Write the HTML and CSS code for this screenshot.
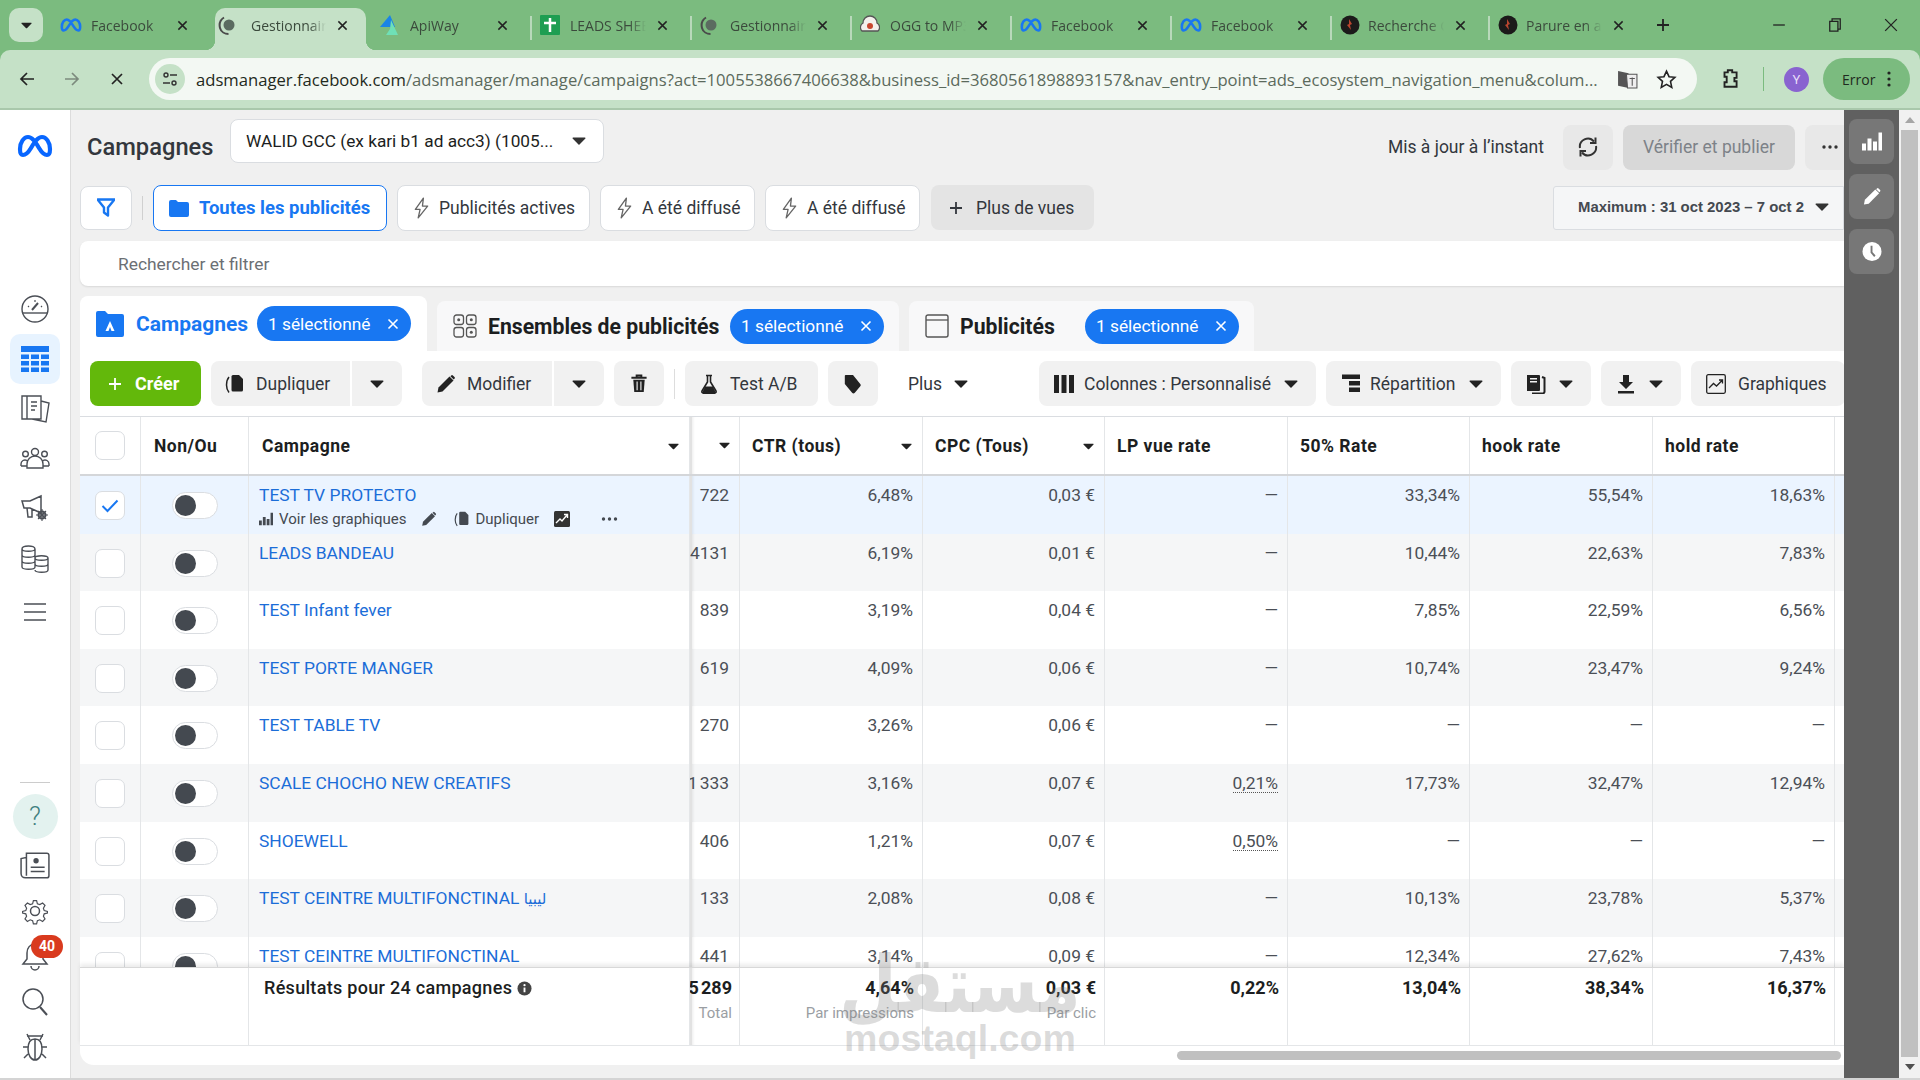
FILE: index.html
```html
<!DOCTYPE html>
<html lang="fr">
<head>
    <meta charset="UTF-8">
    <title>Campagnes - Gestionnaire de publicités</title>
    <link rel="stylesheet" href="styles.css">
</head>
<body>
    <svg class="sprite" xmlns="http://www.w3.org/2000/svg">
        <symbol id="i-x" viewBox="0 0 12 12"><path d="M1.5 1.5l9 9M10.5 1.5l-9 9" fill="none" stroke="currentColor" stroke-width="1.6"/></symbol>
        <symbol id="i-caret" viewBox="0 0 14 8"><path d="M1 .5h12a.6.6 0 0 1 .4 1L7.5 7.4a.7.7 0 0 1-1 0L.6 1.5A.6.6 0 0 1 1 .5z" fill="currentColor"/></symbol>
        <symbol id="i-meta" viewBox="0 0 36 24"><path d="M3 15C3 8 7 3 11 3c4 0 7 4 11 11 3 5 5 7 8 7 2 0 3-2 3-6 0-7-4-12-8-12-4 0-7 4-11 11-3 5-5 7-8 7-2 0-3-2-3-6z" fill="none" stroke="currentColor" stroke-width="4.2"/></symbol>
        <symbol id="i-bolt" viewBox="0 0 18 24"><path d="M11 1.5L2.5 13.5h5l-2 9L15.5 10h-5.5z" fill="none" stroke="currentColor" stroke-width="1.4" stroke-linejoin="round"/></symbol>
        <symbol id="i-folder" viewBox="0 0 20 18"><path d="M0 3a2 2 0 0 1 2-2h5l2 2h9a2 2 0 0 1 2 2v11a2 2 0 0 1-2 2H2a2 2 0 0 1-2-2z" fill="currentColor"/></symbol>
        <symbol id="i-plus" viewBox="0 0 14 14"><path d="M7 1v12M1 7h12" fill="none" stroke="currentColor" stroke-width="1.8"/></symbol>
        <symbol id="i-copy" viewBox="0 0 20 20"><path d="M8 1h6l4 4v11a1.500 1.500 0 0 1-1.500 1.500H8A1.500 1.500 0 0 1 6.500 16V2.500A1.500 1.500 0 0 1 8 1z" fill="currentColor"/><path d="M4 3C2.300 5 1.500 8 1.500 11s.8 5.500 2.500 7.500" fill="none" stroke="currentColor" stroke-width="1.500"/></symbol>
        <symbol id="i-pencil" viewBox="0 0 20 20"><path d="M13.500 2.500l4 4L6.500 17.500 1.500 18.500l1-5z" fill="currentColor"/><path d="M15.200 1.500a1.200 1.200 0 0 1 1.700 0l1.600 1.600a1.200 1.200 0 0 1 0 1.700l-.8.800-3.300-3.300z" fill="currentColor"/></symbol>
        <symbol id="i-trash" viewBox="0 0 18 20"><path d="M1 4h16M6.500 3.500V1.500h5v2" fill="none" stroke="currentColor" stroke-width="2"/><path d="M3 6h12l-1 13H4z" fill="currentColor"/><path d="M7 8v9M11 8v9" stroke="#f1f1f1" stroke-width="1.200"/></symbol>
        <symbol id="i-flask" viewBox="0 0 20 20"><path d="M7 1.500h6M8.500 1.500V8L3 17a1.500 1.500 0 0 0 1.300 2.200h11.400A1.500 1.500 0 0 0 17 17L11.500 8V1.500" fill="none" stroke="currentColor" stroke-width="1.600"/><path d="M6 12.500h8l3 6.500H3z" fill="currentColor"/></symbol>
        <symbol id="i-tag" viewBox="0 0 20 22"><path d="M2 1h8l8 10a2 2 0 0 1 0 2.500l-6 7a2 2 0 0 1-3 0L1 11V2a1 1 0 0 1 1-1z" fill="currentColor"/></symbol>
        <symbol id="i-cols" viewBox="0 0 20 20"><path d="M0 1h5v18H0zM7.500 1h5v18h-5zM15 1h5v18h-5z" fill="currentColor"/></symbol>
        <symbol id="i-split" viewBox="0 0 18 18"><path d="M0 0h18v4.500H0zM7 6.500h11V11H7zM7 13h11v4.500H7z" fill="currentColor"/></symbol>
        <symbol id="i-report" viewBox="0 0 20 20"><path d="M1 1h12a1 1 0 0 1 1 1v14a1 1 0 0 1-1 1H1zM4 4v1.500h7V4zM4 7v1.500h7V7z" fill="currentColor" fill-rule="evenodd"/><path d="M16 3l2.500 1v14l-1 1.500H6" fill="none" stroke="currentColor" stroke-width="2"/></symbol>
        <symbol id="i-down" viewBox="0 0 16 20"><path d="M5 1h6v7h4l-7 7-7-7h4zM0 17h16v2.500H0z" fill="currentColor"/></symbol>
        <symbol id="i-chart" viewBox="0 0 20 20"><rect x=".7" y=".7" width="18.600" height="18.600" rx="1.500" fill="none" stroke="currentColor" stroke-width="1.300"/><path d="M3 14l4.500-4.500 3 2.500L16 6.500M13 6h3.500v3.500" fill="none" stroke="currentColor" stroke-width="1.300"/></symbol>
        <symbol id="i-bars" viewBox="0 0 20 18"><path d="M0 11h4v7H0zM5.500 6h4v12h-4zM11 9h4v9h-4zM16.500 0h3.500v18h-3.500z" fill="currentColor"/></symbol>
        <symbol id="i-dots" viewBox="0 0 16 4"><circle cx="2" cy="2" r="1.700" fill="currentColor"/><circle cx="8" cy="2" r="1.700" fill="currentColor"/><circle cx="14" cy="2" r="1.700" fill="currentColor"/></symbol>
        <symbol id="i-globe" viewBox="0 0 20 20"><path d="M6 2.500C2 5 1 9 2 13s5 6 8.500 6" fill="none" stroke="#4a4a4a" stroke-width="2"/><circle cx="11" cy="10" r="5.500" fill="#5b6b60"/></symbol>
        <symbol id="i-fire" viewBox="0 0 20 20"><circle cx="10" cy="10" r="9.500" fill="#1c1a1a"/><path d="M9 4l3 5-2 1 1 5-4-5 2-1z" fill="#b9452f"/></symbol>
    </svg>

    <header class="chrome">
        <div class="tabstrip">
            <button class="tab-list"><svg class="ico ico-10"><use href="#i-caret"/></svg></button>
            <div class="tab"><svg class="fav fav-meta"><use href="#i-meta"/></svg><span class="tab-title">Facebook</span><svg class="tab-x"><use href="#i-x"/></svg></div>
            <div class="tab active"><svg class="fav"><use href="#i-globe"/></svg><span class="tab-title">Gestionnaire de publicités</span><svg class="tab-x"><use href="#i-x"/></svg></div>
            <div class="tab"><svg class="fav" viewBox="0 0 20 20"><path d="M10 0l5 12H0z" fill="#1a84e6"/><path d="M11 5l7 15H6l4-6z" fill="#6fe0b6"/></svg><span class="tab-title">ApiWay</span><svg class="tab-x"><use href="#i-x"/></svg></div>
            <div class="tab sep"><svg class="fav" viewBox="0 0 20 20"><rect width="20" height="20" rx="1" fill="#1e9e52"/><path d="M10 3v14M4 8h12" stroke="#fff" stroke-width="2.500"/></svg><span class="tab-title">LEADS SHEET 2023</span><svg class="tab-x"><use href="#i-x"/></svg></div>
            <div class="tab sep"><svg class="fav"><use href="#i-globe"/></svg><span class="tab-title">Gestionnaire de publicités</span><svg class="tab-x"><use href="#i-x"/></svg></div>
            <div class="tab sep"><svg class="fav" viewBox="0 0 20 20"><path d="M2 16a5 5 0 0 1 1-8 7 7 0 0 1 14 0 5 5 0 0 1 1 8z" fill="#f4f1ec" stroke="#555" stroke-width="1.300"/><circle cx="10" cy="11" r="3" fill="#c8472f"/></svg><span class="tab-title">OGG to MP3 Converter</span><svg class="tab-x"><use href="#i-x"/></svg></div>
            <div class="tab sep"><svg class="fav fav-meta"><use href="#i-meta"/></svg><span class="tab-title">Facebook</span><svg class="tab-x"><use href="#i-x"/></svg></div>
            <div class="tab sep"><svg class="fav fav-meta"><use href="#i-meta"/></svg><span class="tab-title">Facebook</span><svg class="tab-x"><use href="#i-x"/></svg></div>
            <div class="tab sep tab-narrow"><svg class="fav"><use href="#i-fire"/></svg><span class="tab-title">Recherche Google</span><svg class="tab-x"><use href="#i-x"/></svg></div>
            <div class="tab sep tab-narrow"><svg class="fav"><use href="#i-fire"/></svg><span class="tab-title">Parure en argent</span><svg class="tab-x"><use href="#i-x"/></svg></div>
            <div class="new-tab"><svg class="ico ico-14"><use href="#i-plus"/></svg></div>
            <div class="win-controls">
                <svg class="win-btn" viewBox="0 0 12 12"><path d="M1 6h10" stroke="currentColor" stroke-width="1.100"/></svg>
                <svg class="win-btn" viewBox="0 0 12 12"><path d="M3.500 2.500V.8h7v8.700H8.500M1.500 2.800h7v8.400h-7z" fill="none" stroke="currentColor" stroke-width="1.100"/></svg>
                <svg class="win-btn" viewBox="0 0 12 12"><path d="M1 1l10 10M11 1L1 11" stroke="currentColor" stroke-width="1.100"/></svg>
            </div>
        </div>
        <div class="toolbar-chrome">
            <svg class="nav-btn" viewBox="0 0 16 16"><path d="M15 8H2M8 2L2 8l6 6" fill="none" stroke="currentColor" stroke-width="1.700"/></svg>
            <svg class="nav-btn dim" viewBox="0 0 16 16"><path d="M1 8h13M8 2l6 6-6 6" fill="none" stroke="currentColor" stroke-width="1.700"/></svg>
            <svg class="nav-btn" viewBox="0 0 16 16"><path d="M3 3l10 10M13 3L3 13" fill="none" stroke="currentColor" stroke-width="1.700"/></svg>
            <div class="omnibox">
                <span class="site-chip">
                    <svg class="ico ico-16" viewBox="0 0 16 16"><circle cx="4" cy="4" r="2" fill="none" stroke="#333" stroke-width="1.400"/><path d="M8 4h7M1 12h7" stroke="#333" stroke-width="1.400"/><circle cx="12" cy="12" r="2" fill="none" stroke="#333" stroke-width="1.400"/></svg>
                </span>
                <span class="url"><b>adsmanager.facebook.com</b>/adsmanager/manage/campaigns?act=1005538667406638&amp;business_id=3680561898893157&amp;nav_entry_point=ads_ecosystem_navigation_menu&amp;colum...</span>
                <svg class="omni-ico" viewBox="0 0 20 20"><path d="M1 2l10 2v14L1 16z" fill="#555"/><path d="M9 5h10v13H10z" fill="#eee" stroke="#555"/><path d="M12 9h5M14.500 8v8" stroke="#555"/></svg>
                <svg class="omni-ico star" viewBox="0 0 20 20"><path d="M10 2l2.400 5.300 5.600.6-4.200 3.900 1.200 5.700L10 14.600 5 17.500l1.200-5.700L2 7.900l5.600-.6z" fill="none" stroke="#222" stroke-width="1.500"/></svg>
            </div>
            <svg class="ext-ico" viewBox="0 0 20 20"><path d="M5 4h3V2h4v2h4v5h-2v3h2v5H5v-4h2v-5H5z" fill="none" stroke="#222" stroke-width="1.700"/></svg>
            <span class="chrome-sep"></span>
            <span class="avatar">Y</span>
            <span class="error-pill">Error <svg class="ico kebab" viewBox="0 0 4 16"><circle cx="2" cy="2" r="1.600" fill="#222"/><circle cx="2" cy="8" r="1.600" fill="#222"/><circle cx="2" cy="14" r="1.600" fill="#222"/></svg></span>
        </div>
    </header>

    <div class="app">
        <nav class="sidenav">
            <svg class="nav-logo"><use href="#i-meta"/></svg>
            <div class="nav-top">
                <span class="nav-item"><svg viewBox="0 0 30 30"><circle cx="15" cy="15" r="13" fill="none" stroke="currentColor" stroke-width="1.400"/><path d="M3 19h24" stroke="currentColor" stroke-width="1.400"/><path d="M12 16l6-7" stroke="currentColor" stroke-width="2"/><path d="M8 12l1 1M15 6v2M22 12l-1 1" stroke="currentColor" stroke-width="1.200"/></svg></span>
                <span class="nav-item active"><svg viewBox="0 0 28 26"><path d="M0 0h28v6H0zM0 8.500h8V13H0zM10 8.500h8V13h-8zM20 8.500h8V13h-8zM0 15h8v4.500H0zM10 15h8v4.500h-8zM20 15h8v4.500h-8zM0 21.500h8V26H0zM10 21.500h8V26h-8zM20 21.500h8V26h-8z" fill="currentColor"/></svg></span>
                <span class="nav-item"><svg viewBox="0 0 30 30"><path d="M2 2h19v23H2zM7 2v23M11 8h6M11 12h6M11 16h4M21 7l8 2-3 19-14-3" fill="none" stroke="currentColor" stroke-width="1.400"/></svg></span>
                <span class="nav-item"><svg viewBox="0 0 30 24"><circle cx="15" cy="5" r="3.500" fill="none" stroke="currentColor" stroke-width="1.400"/><circle cx="5.500" cy="7" r="2.800" fill="none" stroke="currentColor" stroke-width="1.400"/><circle cx="24.500" cy="7" r="2.800" fill="none" stroke="currentColor" stroke-width="1.400"/><path d="M7 21v-4a6 6 0 0 1 16 0v4zM1 19v-2a4 4 0 0 1 6-3.500M29 19v-2a4 4 0 0 0-6-3.500M1 19h6M23 19h6" fill="none" stroke="currentColor" stroke-width="1.400"/></svg></span>
                <span class="nav-item"><svg viewBox="0 0 30 28"><path d="M2 6h8L21 1v17l-11-5H4zM7 13l1 9h4V14" fill="none" stroke="currentColor" stroke-width="1.500"/><circle cx="22" cy="20" r="3.500" fill="none" stroke="currentColor" stroke-width="2"/><path d="M22 14v12M16 20h12M18 16l8 8M26 16l-8 8" stroke="currentColor" stroke-width="1.100"/></svg></span>
                <span class="nav-item"><svg viewBox="0 0 30 30"><path d="M2 5c0-4 13-4 13 0v18c0 3-13 3-13 0zM2 5c0 3 13 3 13 0M2 11c0 3 13 3 13 0M2 17c0 3 13 3 13 0M15 14c0-3 13-3 13 0v12c0 3-13 3-13 0M15 14c0 3 13 3 13 0M15 20c0 3 13 3 13 0" fill="none" stroke="currentColor" stroke-width="1.400"/></svg></span>
                <span class="nav-item nav-menu"><svg viewBox="0 0 24 20"><path d="M1 2h22M1 10h22M1 18h22" stroke="currentColor" stroke-width="1.400"/></svg></span>
            </div>
            <div class="nav-bottom">
                <span class="nav-rule"></span>
                <span class="nav-help">?</span>
                <span class="nav-item"><svg viewBox="0 0 28 28"><path d="M6 3h19a2 2 0 0 1 2 2v19a2 2 0 0 1-2 2H5a4 4 0 0 1-4-4V8l5-1zM6 7v17" fill="none" stroke="currentColor" stroke-width="1.400"/><circle cx="15" cy="10" r="2.500" fill="currentColor"/><path d="M10 16h13M10 20h13" stroke="currentColor" stroke-width="1.400"/></svg></span>
                <span class="nav-item"><svg viewBox="0 0 30 30"><circle cx="15" cy="15" r="4.500" fill="none" stroke="currentColor" stroke-width="1.500"/><path d="M13 2h4l1 4 3 1 3.500-2 3 3-2 3.500 1 3 4 1v2l-4 1-1 3 2 3.500-3 3-3.500-2-3 1-1 4h-4l-1-4-3-1-3.500 2-3-3 2-3.500-1-3-4-1v-2l4-1 1-3-2-3.500 3-3L9 7l3-1z" fill="none" stroke="currentColor" stroke-width="1.500" transform="translate(3 3) scale(.8)"/></svg></span>
                <span class="nav-item bell"><svg viewBox="0 0 28 30"><path d="M14 3c-5 0-8 4-8 9v6l-4 5h24l-4-5v-6c0-5-3-9-8-9zM10 25a4 4 0 0 0 8 0" fill="none" stroke="currentColor" stroke-width="1.500"/></svg><span class="badge">40</span></span>
                <span class="nav-item"><svg viewBox="0 0 28 30"><circle cx="12" cy="12" r="10" fill="none" stroke="currentColor" stroke-width="1.500"/><path d="M19 20l7 8" stroke="currentColor" stroke-width="2"/></svg></span>
                <span class="nav-item"><svg viewBox="0 0 26 30"><path d="M13 7c5 0 7 4 7 10s-3 11-7 11-7-5-7-11 2-10 7-10zM13 7v21M8 8L5 2M18 8l3-6M6 15H1M20 15h5M6 22l-4 4M20 22l4 4M5 4h16" fill="none" stroke="currentColor" stroke-width="1.500"/></svg></span>
            </div>
        </nav>

        <main class="main">
            <div class="topbar">
                <h1 class="page-title">Campagnes</h1>
                <div class="account-select"><span>WALID GCC (ex kari b1 ad acc3) (1005...</span><svg class="caret"><use href="#i-caret"/></svg></div>
                <span class="updated">Mis à jour à l’instant</span>
                <button class="top-btn refresh"><svg class="ico ico-22" viewBox="0 0 22 22"><path d="M3 12a8 8 0 0 1 14-6.500M19 10a8 8 0 0 1-14 6.500" fill="none" stroke="#333" stroke-width="2"/><path d="M18.500 1.500v5.500h-5.500M3.500 20.500V15h5.500" fill="none" stroke="#333" stroke-width="2"/></svg></button>
                <button class="top-btn publish">Vérifier et publier</button>
                <button class="top-btn more"><svg class="ico ico-16h"><use href="#i-dots"/></svg></button>
            </div>

            <div class="viewbar">
                <button class="chip chip-filter"><svg class="ico ico-18" viewBox="0 0 18 18"><path d="M.5 1h17L11 9v8l-4-3V9z" fill="none" stroke="#1877f2" stroke-width="2.400" stroke-linejoin="round"/></svg></button>
                <span class="bar-sep"></span>
                <button class="chip chip-on"><svg class="ico ico-20"><use href="#i-folder"/></svg>Toutes les publicités</button>
                <button class="chip w-actives"><svg class="ico bolt"><use href="#i-bolt"/></svg>Publicités actives</button>
                <button class="chip w-diff"><svg class="ico bolt"><use href="#i-bolt"/></svg>A été diffusé</button>
                <button class="chip w-diff"><svg class="ico bolt"><use href="#i-bolt"/></svg>A été diffusé</button>
                <button class="chip chip-more"><svg class="ico ico-14"><use href="#i-plus"/></svg>Plus de vues</button>
                <div class="date-range"><span class="date-text">Maximum : 31 oct 2023 – 7 oct 2</span><svg class="caret"><use href="#i-caret"/></svg></div>
            </div>

            <div class="searchbar">Rechercher et filtrer</div>

            <div class="level-tabs">
                <div class="level-tab current">
                    <svg class="level-ico" viewBox="0 0 28 26"><path d="M0 2a2 2 0 0 1 2-2h7l3 3h14a2 2 0 0 1 2 2v19a2 2 0 0 1-2 2H2a2 2 0 0 1-2-2z" fill="#1877f2"/><path d="M14 10l-4.500 10h3l1.500-4 1.500 4h3z" fill="#fff"/></svg>
                    <span class="level-name">Campagnes</span>
                    <span class="sel-pill">1 sélectionné<svg class="pill-x"><use href="#i-x"/></svg></span>
                </div>
                <div class="level-tab wide">
                    <svg class="level-ico" viewBox="0 0 24 24"><g fill="none" stroke="#555" stroke-width="1.300"><rect x="1" y="1" width="9.500" height="9.500" rx="2.500"/><rect x="13.500" y="1" width="9.500" height="9.500" rx="2.500"/><rect x="1" y="13.500" width="9.500" height="9.500" rx="2.500"/><rect x="13.500" y="13.500" width="9.500" height="9.500" rx="2.500"/></g><circle cx="18.300" cy="5.700" r="1.500" fill="#555"/><circle cx="18.300" cy="18.300" r="1.500" fill="#555"/><circle cx="5.700" cy="5.700" r="1.500" fill="#555"/></svg>
                    <span class="level-name">Ensembles de publicités</span>
                    <span class="sel-pill">1 sélectionné<svg class="pill-x"><use href="#i-x"/></svg></span>
                </div>
                <div class="level-tab ads">
                    <svg class="level-ico" viewBox="0 0 24 24"><rect x="1" y="1" width="22" height="22" rx="2" fill="none" stroke="#555" stroke-width="1.400"/><path d="M1 6h22" stroke="#555" stroke-width="1.300"/></svg>
                    <span class="level-name">Publicités</span>
                    <span class="sel-pill">1 sélectionné<svg class="pill-x"><use href="#i-x"/></svg></span>
                </div>
            </div>

            <div class="actions">
                <button class="act act-create"><svg class="ico ico-14"><use href="#i-plus"/></svg>Créer</button>
                <button class="act w-dup"><svg class="ico ico-20"><use href="#i-copy"/></svg>Dupliquer</button>
                <button class="act act-caret"><svg class="caret"><use href="#i-caret"/></svg></button>
                <button class="act w-mod"><svg class="ico ico-20"><use href="#i-pencil"/></svg>Modifier</button>
                <button class="act act-caret"><svg class="caret"><use href="#i-caret"/></svg></button>
                <button class="act act-icon"><svg class="ico ico-18"><use href="#i-trash"/></svg></button>
                <span class="act-sep"></span>
                <button class="act w-ab"><svg class="ico ico-20"><use href="#i-flask"/></svg>Test A/B</button>
                <button class="act act-icon"><svg class="ico ico-20"><use href="#i-tag"/></svg></button>
                <button class="act w-plus">Plus<svg class="caret"><use href="#i-caret"/></svg></button>
                <button class="act w-cols"><svg class="ico ico-20"><use href="#i-cols"/></svg>Colonnes : Personnalisé<svg class="caret"><use href="#i-caret"/></svg></button>
                <button class="act w-split"><svg class="ico ico-18"><use href="#i-split"/></svg>Répartition<svg class="caret"><use href="#i-caret"/></svg></button>
                <button class="act w-pair"><svg class="ico ico-20"><use href="#i-report"/></svg><svg class="caret"><use href="#i-caret"/></svg></button>
                <button class="act w-pair"><svg class="ico ico-20"><use href="#i-down"/></svg><svg class="caret"><use href="#i-caret"/></svg></button>
                <button class="act w-charts"><svg class="ico ico-20"><use href="#i-chart"/></svg>Graphiques</button>
            </div>

            <div class="grid-table">
                <div class="row head">
                    <div class="cell c-check"><span class="check"></span></div>
                    <div class="cell c-toggle"><span>Non/Ou</span></div>
                    <div class="cell c-name"><span>Campagne</span><svg class="sort"><use href="#i-caret"/></svg></div>
                    <div class="cell c-imp"><svg class="sort"><use href="#i-caret"/></svg></div>
                    <div class="cell"><span>CTR (tous)</span><svg class="sort"><use href="#i-caret"/></svg></div>
                    <div class="cell"><span>CPC (Tous)</span><svg class="sort"><use href="#i-caret"/></svg></div>
                    <div class="cell"><span>LP vue rate</span></div>
                    <div class="cell"><span>50% Rate</span></div>
                    <div class="cell"><span>hook rate</span></div>
                    <div class="cell"><span>hold rate</span></div>
                    <div class="cell c-end"></div>
                </div>
                <div class="rows">
                    <div class="row selected">
                        <div class="cell c-check"><span class="check on"><svg viewBox="0 0 18 14"><path d="M1.500 7l5 5L16.500 1.500" fill="none" stroke="#1877f2" stroke-width="2"/></svg></span></div>
                        <div class="cell c-toggle"><span class="toggle"></span></div>
                        <div class="cell c-name">
                            <a class="camp">TEST TV PROTECTO</a>
                            <div class="row-tools">
                                <svg class="tool-bars"><use href="#i-bars"/></svg><span class="tool-text">Voir les graphiques</span>
                                <svg class="tool-ico"><use href="#i-pencil"/></svg>
                                <svg class="tool-ico"><use href="#i-copy"/></svg><span class="tool-text">Dupliquer</span>
                                <svg class="tool-ico boxed" viewBox="0 0 16 16"><rect width="16" height="16" rx="1.500" fill="#333"/><path d="M2 12l4-4 2 2 5-6M10 3.500h3.500V7" fill="none" stroke="#fff" stroke-width="1.400"/></svg>
                                <svg class="tool-dots"><use href="#i-dots"/></svg>
                            </div>
                        </div>
                        <div class="cell c-imp">722</div><div class="cell">6,48%</div><div class="cell">0,03 €</div><div class="cell">—</div><div class="cell">33,34%</div><div class="cell">55,54%</div><div class="cell">18,63%</div><div class="cell c-end"></div>
                    </div>
                    <div class="row alt">
                        <div class="cell c-check"><span class="check"></span></div><div class="cell c-toggle"><span class="toggle"></span></div>
                        <div class="cell c-name"><a class="camp">LEADS BANDEAU</a></div>
                        <div class="cell c-imp">4131</div><div class="cell">6,19%</div><div class="cell">0,01 €</div><div class="cell">—</div><div class="cell">10,44%</div><div class="cell">22,63%</div><div class="cell">7,83%</div><div class="cell c-end"></div>
                    </div>
                    <div class="row">
                        <div class="cell c-check"><span class="check"></span></div><div class="cell c-toggle"><span class="toggle"></span></div>
                        <div class="cell c-name"><a class="camp">TEST Infant fever</a></div>
                        <div class="cell c-imp">839</div><div class="cell">3,19%</div><div class="cell">0,04 €</div><div class="cell">—</div><div class="cell">7,85%</div><div class="cell">22,59%</div><div class="cell">6,56%</div><div class="cell c-end"></div>
                    </div>
                    <div class="row alt">
                        <div class="cell c-check"><span class="check"></span></div><div class="cell c-toggle"><span class="toggle"></span></div>
                        <div class="cell c-name"><a class="camp">TEST PORTE MANGER</a></div>
                        <div class="cell c-imp">619</div><div class="cell">4,09%</div><div class="cell">0,06 €</div><div class="cell">—</div><div class="cell">10,74%</div><div class="cell">23,47%</div><div class="cell">9,24%</div><div class="cell c-end"></div>
                    </div>
                    <div class="row">
                        <div class="cell c-check"><span class="check"></span></div><div class="cell c-toggle"><span class="toggle"></span></div>
                        <div class="cell c-name"><a class="camp">TEST TABLE TV</a></div>
                        <div class="cell c-imp">270</div><div class="cell">3,26%</div><div class="cell">0,06 €</div><div class="cell">—</div><div class="cell">—</div><div class="cell">—</div><div class="cell">—</div><div class="cell c-end"></div>
                    </div>
                    <div class="row alt">
                        <div class="cell c-check"><span class="check"></span></div><div class="cell c-toggle"><span class="toggle"></span></div>
                        <div class="cell c-name"><a class="camp">SCALE CHOCHO NEW CREATIFS</a></div>
                        <div class="cell c-imp">1&#8239;333</div><div class="cell">3,16%</div><div class="cell">0,07 €</div><div class="cell"><span class="dotted">0,21%</span></div><div class="cell">17,73%</div><div class="cell">32,47%</div><div class="cell">12,94%</div><div class="cell c-end"></div>
                    </div>
                    <div class="row">
                        <div class="cell c-check"><span class="check"></span></div><div class="cell c-toggle"><span class="toggle"></span></div>
                        <div class="cell c-name"><a class="camp">SHOEWELL</a></div>
                        <div class="cell c-imp">406</div><div class="cell">1,21%</div><div class="cell">0,07 €</div><div class="cell"><span class="dotted">0,50%</span></div><div class="cell">—</div><div class="cell">—</div><div class="cell">—</div><div class="cell c-end"></div>
                    </div>
                    <div class="row alt">
                        <div class="cell c-check"><span class="check"></span></div><div class="cell c-toggle"><span class="toggle"></span></div>
                        <div class="cell c-name"><a class="camp">TEST CEINTRE MULTIFONCTINAL <span class="arabic">ليبيا</span></a></div>
                        <div class="cell c-imp">133</div><div class="cell">2,08%</div><div class="cell">0,08 €</div><div class="cell">—</div><div class="cell">10,13%</div><div class="cell">23,78%</div><div class="cell">5,37%</div><div class="cell c-end"></div>
                    </div>
                    <div class="row">
                        <div class="cell c-check"><span class="check"></span></div><div class="cell c-toggle"><span class="toggle"></span></div>
                        <div class="cell c-name"><a class="camp">TEST CEINTRE MULTIFONCTINAL</a></div>
                        <div class="cell c-imp">441</div><div class="cell">3,14%</div><div class="cell">0,09 €</div><div class="cell">—</div><div class="cell">12,34%</div><div class="cell">27,62%</div><div class="cell">7,43%</div><div class="cell c-end"></div>
                    </div>
                </div>
                <div class="row totals">
                    <div class="cell c-blank"></div>
                    <div class="cell c-name"><span class="tot-label">Résultats pour 24 campagnes</span><svg class="info" viewBox="0 0 16 16"><circle cx="8" cy="8" r="7.500" fill="#444"/><path d="M8 7v5" stroke="#fff" stroke-width="2"/><circle cx="8" cy="4.500" r="1.200" fill="#fff"/></svg></div>
                    <div class="cell c-imp"><div class="tot">5&#8239;289<small>Total</small></div></div>
                    <div class="cell"><div class="tot">4,64%<small>Par impressions</small></div></div>
                    <div class="cell"><div class="tot">0,03 €<small>Par clic</small></div></div>
                    <div class="cell"><div class="tot">0,22%</div></div>
                    <div class="cell"><div class="tot">13,04%</div></div>
                    <div class="cell"><div class="tot">38,34%</div></div>
                    <div class="cell"><div class="tot">16,37%</div></div>
                    <div class="cell c-end"></div>
                </div>
                <div class="h-scroll"><span class="h-thumb"></span></div>
            </div>

            <div class="watermark"><span class="wm-ar">مستقل</span><span class="wm-en">mostaql.com</span></div>
        </main>

        <aside class="rail">
            <button class="rail-btn"><svg><use href="#i-bars"/></svg></button>
            <button class="rail-btn"><svg><use href="#i-pencil"/></svg></button>
            <button class="rail-btn"><svg viewBox="0 0 20 20"><circle cx="10" cy="10" r="10" fill="#fff"/><path d="M9.500 4v7l3.500 4" fill="none" stroke="#777" stroke-width="2"/></svg></button>
        </aside>

        <div class="page-scroll">
            <svg class="arrow" viewBox="0 0 10 6"><path d="M5 0l5 6H0z" fill="#a6a6a6"/></svg>
            <span class="v-thumb"></span>
            <svg class="arrow" viewBox="0 0 10 6"><path d="M0 0h10L5 6z" fill="#505050"/></svg>
        </div>
    </div>
    <div class="page-foot"></div>
</body>
</html>
```

FILE: styles.css
```css
* {
    margin: 0;
    padding: 0;
    box-sizing: border-box;
}

body {
    width: 1920px;
    height: 1080px;
    overflow: hidden;
    position: relative;
    background: #f0f0f0;
    color: #1c1e21;
    font-family: Roboto, "Liberation Sans", "DejaVu Sans", sans-serif;
    font-size: 16px;
}

button {
    border: 0;
    font: inherit;
    color: inherit;
    background: none;
}

.sprite {
    display: none;
}

.ico {
    flex: none;
    display: block;
}

.ico-10 { width: 11px; height: 7px; }
.ico-14 { width: 14px; height: 14px; }
.ico-16 { width: 16px; height: 16px; }
.ico-16h { width: 16px; height: 4px; }
.ico-18 { width: 18px; height: 19px; }
.ico-20 { width: 20px; height: 20px; }
.ico-22 { width: 22px; height: 22px; }

.caret {
    flex: none;
    width: 14px;
    height: 8px;
    color: #333;
}

/* navigateur */
.chrome {
    height: 110px;
    background: #7bbb7f;
    border-bottom: 2px solid #a9c8ab;
}

.tabstrip {
    height: 50px;
    display: flex;
    align-items: flex-end;
    padding-left: 9px;
    font-family: "Open Sans", sans-serif;
    position: relative;
}

.tab-list {
    width: 34px;
    height: 34px;
    margin: 0 7px 8px 0;
    background: #c5e1c7;
    border-radius: 10px;
    display: flex;
    align-items: center;
    justify-content: center;
    color: #222;
}

.tab {
    width: 160px;
    height: 42px;
    padding: 0 22px 8px 10px;
    display: flex;
    align-items: center;
    position: relative;
    font-size: 14px;
    color: #3b4a3c;
}

.tab-narrow {
    width: 158px;
}

.tab-narrow .fav {
    margin-right: 8px;
}

.tab.active {
    background: #c5e1c7;
    border-radius: 10px 10px 0 0;
    width: 151px;
    margin: 0 4px 0 5px;
    padding-left: 3px;
    padding-right: 18px;
}

.tab.active::before,
.tab.active::after {
    content: "";
    position: absolute;
    bottom: 0;
    width: 10px;
    height: 10px;
}

.tab.active::before {
    left: -10px;
    background: radial-gradient(circle at 0 0, transparent 10px, #c5e1c7 10.500px);
}

.tab.active::after {
    right: -10px;
    background: radial-gradient(circle at 100% 0, transparent 10px, #c5e1c7 10.500px);
}

.tab.active .fav {
    margin-right: 13px;
}

.tab.sep::before {
    content: "";
    position: absolute;
    left: 0;
    top: 8px;
    height: 24px;
    width: 2px;
    background: #b9d9bb;
}

.fav {
    flex: none;
    width: 20px;
    height: 20px;
    margin-right: 10px;
}

.fav-meta {
    color: #1877f2;
    width: 22px;
    height: 16px;
    margin-right: 9px;
}

.tab-title {
    flex: 1;
    min-width: 0;
    white-space: nowrap;
    overflow: hidden;
    -webkit-mask-image: linear-gradient(to right, #000 78%, transparent 100%);
    mask-image: linear-gradient(to right, #000 78%, transparent 100%);
}

.tab-x {
    flex: none;
    width: 11px;
    height: 11px;
    margin-left: 11px;
    color: #222;
}

.new-tab {
    width: 34px;
    height: 34px;
    margin: 0 0 8px 0;
    display: flex;
    align-items: center;
    justify-content: center;
    color: #222;
}

.win-controls {
    margin-left: auto;
    height: 50px;
    display: flex;
    align-items: center;
    gap: 42px;
    padding-right: 22px;
    color: #222;
}

.win-btn {
    width: 14px;
    height: 14px;
}

.toolbar-chrome {
    height: 58px;
    display: flex;
    align-items: center;
    padding: 0 8px 0 19px;
    background: #c5e1c7;
    border-radius: 10px 10px 0 0;
}

.nav-btn {
    flex: none;
    width: 16px;
    height: 16px;
    margin-right: 29px;
    color: #222;
}

.nav-btn.dim {
    color: #7c8a7d;
}

.nav-btn:nth-child(3) {
    margin-right: 24px;
}

.omnibox {
    flex: none;
    width: 1548px;
    height: 42px;
    background: #f3f8f3;
    border-radius: 21px;
    display: flex;
    align-items: center;
    padding: 0 20px 0 6px;
    font-family: "Open Sans", sans-serif;
}

.site-chip {
    flex: none;
    width: 30px;
    height: 30px;
    border-radius: 50%;
    background: #c5e1c7;
    display: flex;
    align-items: center;
    justify-content: center;
}

.url {
    flex: 1;
    min-width: 0;
    margin-left: 11px;
    font-size: 16.650px;
    white-space: nowrap;
    overflow: hidden;
    color: #5b6a5c;
}

.url b {
    font-weight: 400;
    color: #1f2a20;
}

.omni-ico {
    flex: none;
    width: 21px;
    height: 21px;
    margin-left: 20px;
}

.omni-ico.star {
    margin-left: 18px;
}

.ext-ico {
    flex: none;
    width: 22px;
    height: 22px;
    margin-left: 22px;
}

.chrome-sep {
    flex: none;
    width: 1px;
    height: 24px;
    margin: 0 20px 0 22px;
    background: #7bbb7f;
}

.avatar {
    flex: none;
    width: 25px;
    height: 25px;
    border-radius: 50%;
    background: #8963d0;
    color: #e8def8;
    font-size: 13px;
    display: flex;
    align-items: center;
    justify-content: center;
}

.error-pill {
    flex: none;
    width: 87px;
    height: 42px;
    margin-left: 14px;
    border-radius: 21px;
    background: #7bbb7f;
    display: flex;
    align-items: center;
    justify-content: space-between;
    padding: 0 19px;
    font-family: "Open Sans", sans-serif;
    font-size: 14px;
    color: #1f2a20;
}

.kebab {
    width: 4px;
    height: 16px;
}

/* application */
.app {
    height: 968px;
    display: flex;
}

.sidenav {
    flex: none;
    width: 71px;
    background: #fff;
    border-right: 1px solid #dcdcdc;
    display: flex;
    flex-direction: column;
    align-items: center;
    color: #4b4f56;
}

.nav-logo {
    width: 36px;
    height: 24px;
    margin: 24px 0 0;
    color: #0866ff;
}

.nav-top {
    display: flex;
    flex-direction: column;
    align-items: center;
    margin-top: 126px;
}

.nav-item {
    width: 50px;
    height: 50px;
    display: flex;
    align-items: center;
    justify-content: center;
    position: relative;
    flex: none;
}

.nav-item svg {
    width: 30px;
    height: 30px;
}

.nav-item.active {
    background: #e7f3ff;
    border-radius: 10px;
    color: #1877f2;
}

.nav-item.active svg {
    width: 28px;
    height: 26px;
}

.nav-menu {
    margin-top: 3px;
}

.nav-menu svg {
    width: 24px;
    height: 20px;
}

.nav-bottom {
    margin-top: auto;
    padding-bottom: 8px;
    display: flex;
    flex-direction: column;
    align-items: center;
}

.nav-bottom .nav-item {
    height: 45.500px;
}

.nav-rule {
    width: 30px;
    height: 1px;
    background: #ccc;
    margin-bottom: 11px;
}

.nav-help {
    width: 45px;
    height: 45px;
    border-radius: 50%;
    background: #e3f2ef;
    color: #3f7f80;
    font-size: 26px;
    font-weight: 300;
    display: flex;
    align-items: center;
    justify-content: center;
    margin-bottom: 4px;
}

.badge {
    position: absolute;
    top: 1px;
    left: 21px;
    width: 32px;
    height: 23px;
    border-radius: 12px;
    background: #d93a1e;
    color: #fff;
    font-size: 14px;
    font-weight: 700;
    display: flex;
    align-items: center;
    justify-content: center;
}

.main {
    flex: none;
    width: 1773px;
    padding-left: 9px;
    position: relative;
    overflow: hidden;
    display: flex;
    flex-direction: column;
}

.topbar {
    height: 74px;
    flex: none;
    display: flex;
    align-items: center;
}

.page-title {
    font-size: 23.700px;
    font-weight: 500;
    color: #33373d;
    margin-left: 7px;
    width: 143px;
}

.account-select {
    width: 374px;
    height: 44px;
    margin-bottom: 12px;
    background: #fff;
    border: 1px solid #dadde1;
    border-radius: 8px;
    display: flex;
    align-items: center;
    justify-content: space-between;
    padding: 0 17px 0 15px;
    font-size: 17.250px;
}

.updated {
    margin-left: auto;
    font-size: 17.500px;
    color: #33373d;
    margin-right: 19px;
}

.top-btn {
    flex: none;
    height: 45px;
    border-radius: 8px;
    background: #e8e8e8;
    display: flex;
    align-items: center;
    justify-content: center;
}

.refresh {
    width: 50px;
    margin-right: 10px;
}

.publish {
    width: 172px;
    margin-right: 10px;
    background: #d8d8d8;
    color: #7d8288;
    font-size: 17.500px;
}

.more {
    width: 39px;
    border-radius: 8px 0 0 8px;
    justify-content: flex-start;
    padding-left: 17px;
    color: #333;
}

.viewbar {
    height: 47px;
    flex: none;
    display: flex;
    align-items: center;
    gap: 10px;
}

.chip {
    flex: none;
    height: 46px;
    background: #fff;
    border: 1px solid #dadde1;
    border-radius: 8px;
    display: flex;
    align-items: center;
    gap: 9px;
    padding-left: 15px;
    font-size: 17.500px;
    color: #33373d;
}

.chip-filter {
    width: 52px;
    height: 44px;
    justify-content: center;
    padding: 0;
}

.bar-sep {
    width: 1px;
    height: 24px;
    background: #d0d0d0;
}

.chip-on {
    width: 234px;
    border-color: #1877f2;
    color: #1877f2;
    font-size: 18.500px;
    font-weight: 700;
    gap: 10px;
}

.chip-on .ico {
    color: #1877f2;
}

.bolt {
    width: 17px;
    height: 26px;
    color: #666;
}

.w-actives { width: 193px; }
.w-diff { width: 155px; }

.chip-more {
    width: 163px;
    height: 45px;
    margin-left: 1px;
    background: #e4e4e4;
    border: 0;
    gap: 13px;
    padding-left: 18px;
}

.date-range {
    margin-left: auto;
    width: 291px;
    height: 44px;
    background: #f5f6f7;
    border: 1px solid #dadde1;
    border-radius: 3px 0 0 3px;
    display: flex;
    align-items: center;
    padding: 0 14px 2px 24px;
    justify-content: space-between;
    font-family: "Liberation Sans", sans-serif;
    font-size: 14.900px;
    font-weight: 700;
    color: #444950;
}

.searchbar {
    flex: none;
    height: 45px;
    margin-top: 10px;
    background: #fff;
    border-radius: 8px 0 0 8px;
    box-shadow: 0 1px 2px rgba(0,0,0,0.1);
    display: flex;
    align-items: center;
    padding-left: 38px;
    font-size: 17.400px;
    color: #6b6f74;
}

.level-tabs {
    flex: none;
    height: 55px;
    margin-top: 10px;
    display: flex;
    align-items: flex-end;
    gap: 10px;
}

.level-tab {
    height: 50px;
    background: #f8f8f9;
    border-radius: 8px 8px 0 0;
    display: flex;
    align-items: center;
    padding: 0 15px 0 16px;
    font-size: 21.200px;
    font-weight: 700;
    color: #1c1e21;
}

.level-tab.current {
    width: 347px;
    height: 55px;
    background: #fff;
    padding-right: 16px;
    color: #1877f2;
    font-size: 21px;
}

.level-tab.wide { width: 462px; }
.level-tab.ads { width: 345px; }

.level-ico {
    flex: none;
    width: 24px;
    height: 24px;
    margin-right: 11px;
}

.current .level-ico {
    width: 28px;
    height: 26px;
    margin-right: 12px;
}

.sel-pill {
    flex: none;
    width: 154px;
    height: 35px;
    margin-left: auto;
    border-radius: 18px;
    background: #1877f2;
    color: #fff;
    font-size: 17.300px;
    font-weight: 400;
    display: flex;
    align-items: center;
    justify-content: space-between;
    padding: 0 12px 0 11px;
}

.pill-x {
    width: 12px;
    height: 12px;
}

.actions {
    flex: none;
    height: 65px;
    background: #fff;
    display: flex;
    align-items: center;
    padding-left: 10px;
    gap: 10px;
}

.act {
    flex: none;
    height: 45px;
    background: #f1f1f1;
    border-radius: 8px;
    display: flex;
    align-items: center;
    gap: 11px;
    padding: 0 14px;
    font-size: 17.500px;
    color: #33373d;
}

.act .ico {
    color: #222;
}

.act .caret {
    color: #222;
}

.act-create {
    width: 111px;
    background: #63b80b;
    color: #fff;
    font-size: 18px;
    font-weight: 700;
    padding-left: 18px;
    gap: 13px;
}

.act-create .ico {
    color: #fff;
}

.act-caret {
    width: 50px;
    margin-left: -8px;
    justify-content: center;
    padding: 0;
    border-radius: 0 8px 8px 0;
}

.w-dup { width: 139px; border-radius: 8px 0 0 8px; }
.w-mod { width: 130px; border-radius: 8px 0 0 8px; margin-left: 10px; }
.act-icon { width: 50px; justify-content: center; padding: 0; }

.act-sep {
    flex: none;
    width: 1px;
    height: 30px;
    background: #ddd;
}

.w-ab { width: 133px; }
.w-plus { width: 151px; margin: 0 0 0 -10px; background: none; padding-left: 30px; gap: 12px; }
.w-cols { width: 277px; padding: 0 18px 0 15px; gap: 10px; }
.w-split { width: 175px; padding: 0 18px 0 16px; gap: 10px; }
.w-cols .caret, .w-split .caret { margin-left: auto; }
.w-pair { width: 80px; padding: 0 18px 0 15px; justify-content: space-between; }
.w-charts { width: 154px; padding-left: 15px; gap: 12px; }

/* tableau */
.grid-table {
    flex: 1;
    background: #fff;
    border-top: 1px solid #dadde1;
    border-radius: 0 0 0 14px;
    margin-bottom: 13px;
    display: flex;
    flex-direction: column;
    min-height: 0;
}

.row {
    display: grid;
    grid-template-columns: 61px 108px 441px 50px 183px 182px 183px 182px 183px 182px 9px;
    height: 57.600px;
    flex: none;
}

.rows {
    height: 491px;
    flex: none;
    overflow: hidden;
}

.cell {
    min-width: 0;
    overflow: hidden;
    border-right: 1px solid #e4e6e8;
    display: flex;
    justify-content: flex-end;
    padding: 9px 9px 0 10px;
    line-height: 21px;
    font-size: 17.400px;
    color: #4b4f56;
    white-space: nowrap;
}

.c-end { border-right: 0; padding: 0; }

.c-check {
    justify-content: center;
    padding: 15px 0 0;
}

.c-toggle {
    justify-content: center;
    padding: 16px 0 0;
}

.c-name {
    display: block;
    padding: 9px 0 0 10px;
    position: relative;
}

.c-imp {
    box-shadow: inset 2px 0 0 #e2e2e2, inset 5px 0 3px -2px rgba(0,0,0,0.08);
    padding-left: 0;
    padding-right: 10px;
}

.head {
    height: 59px;
    border-bottom: 2px solid #d4d6d9;
}

.head .cell {
    justify-content: space-between;
    align-items: center;
    padding: 2px 10px 0 12px;
    font-size: 17.500px;
    font-weight: 700;
    letter-spacing: .5px;
    color: #1c1e21;
}

.head .c-check {
    justify-content: center;
    padding: 0;
}

.head .c-toggle {
    justify-content: flex-start;
    padding-left: 13px;
}

.head .c-name {
    display: flex;
    padding-left: 13px;
}

.head .c-imp {
    padding: 0 9px 0 0;
    justify-content: flex-end;
}

.sort {
    width: 11px;
    height: 7px;
    color: #222;
}

.check {
    display: flex;
    align-items: center;
    justify-content: center;
    width: 30px;
    height: 29px;
    background: #fff;
    border: 1px solid #dadde1;
    border-radius: 7px;
}

.check svg {
    width: 18px;
    height: 14px;
}

.toggle {
    display: flex;
    align-items: center;
    width: 46px;
    height: 27px;
    background: #fff;
    border: 1px solid #dadde1;
    border-radius: 14px;
    padding-left: 2px;
}

.toggle::before {
    content: "";
    width: 21px;
    height: 21px;
    border-radius: 50%;
    background: #444950;
}

.alt { background: #f5f6f7; }
.selected { background: #ebf4ff; }

.camp {
    color: #1b6dd8;
    font-size: 17.400px;
}

.arabic {
    font-family: "DejaVu Sans", sans-serif;
    font-size: 15px;
}

.dotted {
    height: 20px;
    border-bottom: 1px dotted #555;
}

.row-tools {
    display: flex;
    align-items: center;
    margin-top: 3px;
    height: 20px;
    color: #444950;
}

.tool-text {
    font-size: 15px;
}

.tool-bars {
    flex: none;
    width: 14px;
    height: 14px;
    margin-right: 6px;
}

.tool-ico {
    flex: none;
    width: 16px;
    height: 16px;
    margin: 0 17px 0 15px;
}

.tool-ico + .tool-ico {
    margin: 0 5px 0 0;
}

.tool-ico.boxed {
    margin-left: 15px;
}

.tool-dots {
    flex: none;
    width: 17px;
    height: 4px;
    margin-left: 14px;
}

.totals {
    height: 79px;
    border-top: 1px solid #d8d8d8;
    border-bottom: 1px solid #e4e6e8;
    box-shadow: 0 -3px 4px rgba(0,0,0,0.08);
    position: relative;
    grid-template-columns: 169px 441px 50px 183px 182px 183px 182px 183px 182px 9px;
}

.totals .cell {
    padding-top: 9px;
    padding-right: 8px;
}

.totals .c-blank {
    border-right: 1px solid #e4e6e8;
    padding: 0;
}

.totals .c-name {
    display: flex;
    justify-content: flex-start;
    align-items: flex-start;
    padding-left: 15px;
    gap: 5px;
}

.totals .c-imp {
    padding-right: 7px;
}

.tot-label {
    font-weight: 500;
    color: #1c1e21;
    font-size: 18px;
    letter-spacing: .3px;
}

.info {
    flex: none;
    width: 15px;
    height: 15px;
    margin-top: 4px;
}

.tot {
    font-weight: 700;
    color: #1c1e21;
    text-align: right;
    font-size: 18px;
}

.tot small {
    display: block;
    font-weight: 400;
    font-size: 15px;
    color: #9a9ea3;
    margin-top: 5px;
}

.h-scroll {
    height: 20px;
    padding: 5px 3px 0 1097px;
    flex: none;
}

.h-thumb {
    display: block;
    height: 9px;
    background: #c0c0c0;
    border-radius: 5px;
}

.watermark {
    position: absolute;
    left: 769px;
    top: 842px;
    width: 240px;
    display: flex;
    flex-direction: column;
    align-items: center;
    color: rgba(130,130,130,0.28);
    pointer-events: none;
}

.wm-ar {
    font-family: "DejaVu Sans", sans-serif;
    font-weight: 700;
    font-size: 66px;
    line-height: 65px;
    white-space: nowrap;
    transform: scaleY(1.2);
}

.wm-en {
    font-family: "Liberation Sans", sans-serif;
    font-weight: 700;
    font-size: 37.600px;
    line-height: 42px;
}

.rail {
    flex: none;
    width: 55px;
    background: #606060;
    padding: 9px 5px 0;
    display: flex;
    flex-direction: column;
    gap: 10px;
}

.rail-btn {
    width: 45px;
    height: 45px;
    border-radius: 8px;
    background: #777;
    color: #fff;
    display: flex;
    align-items: center;
    justify-content: center;
}

.rail-btn svg {
    width: 20px;
    height: 19px;
}

.page-scroll {
    flex: none;
    width: 21px;
    background: #f1f1f1;
    display: flex;
    flex-direction: column;
    align-items: center;
    padding: 7px 0 8px;
}

.arrow {
    width: 10px;
    height: 6px;
    flex: none;
}

.v-thumb {
    width: 17px;
    flex: 1;
    background: #c0c0c0;
    margin: 7px 0;
}

.page-foot {
    height: 2px;
    background: #d4d4d4;
}
```
